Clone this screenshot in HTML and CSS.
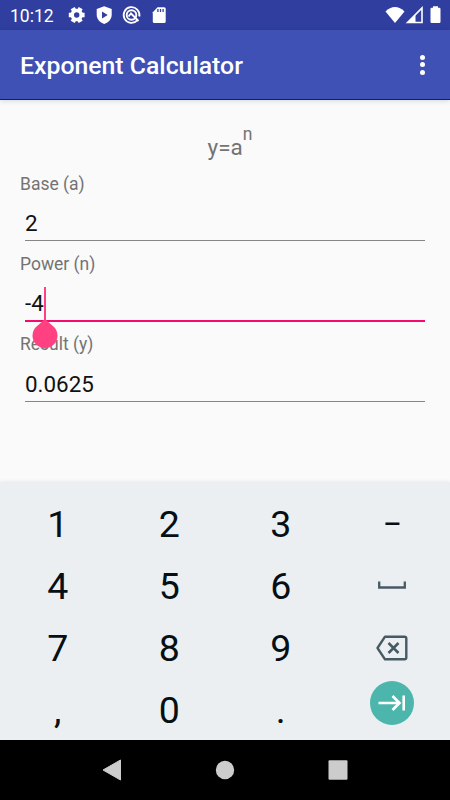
FILE: index.html
```html
<!DOCTYPE html>
<html lang="en">
<head>
  <meta charset="UTF-8">
  <meta name="viewport" content="width=device-width, initial-scale=1.0">
  <title>Exponent Calculator</title>
  <link rel="stylesheet" href="styles.css">
</head>
<body>
  <div class="status-bar">
    <span class="time">10:12</span>
    <svg class="status-icons" width="100" height="30" viewBox="0 0 100 30">
      <!-- settings -->
      <g transform="translate(8.700 15)">
        <circle r="4.500" fill="none" stroke="#fff" stroke-width="3.600"/>
        <path d="M-4 -6.900L-2.800 -4.800M4 -6.900L2.800 -4.800M-4 6.900L-2.800 4.800M4 6.900L2.800 4.800M-7.900 0H-5.500M5.500 0H7.900" stroke="#fff" stroke-width="4.600"/>
      </g>
      <!-- play protect -->
      <path d="M36.200 6.300L43.700 9.100V14.500C43.700 19 40.700 22.500 36.200 24C31.700 22.500 28.700 19 28.700 14.500V9.100Z" fill="#fff"/>
      <path d="M34 11.600V18.400L39.700 15Z" fill="#303f9f"/>
      <!-- data saver -->
      <path d="M69.500 20.200A7.900 7.900 0 1 1 71.300 16.500" fill="none" stroke="#fff" stroke-width="1.800"/>
      <circle cx="63.500" cy="15" r="4.800" fill="none" stroke="#fff" stroke-width="1.900"/>
      <path d="M60.500 16.500L63 13.500L70.500 21" fill="none" stroke="#fff" stroke-width="1.900"/>
      <!-- sd card -->
      <path d="M89.500 7.200H96.200Q97.700 7.200 97.700 8.700V21.500Q97.700 23 96.200 23H86.300Q84.800 23 84.800 21.500V12.200Z" fill="#fff"/>
      <path d="M89.900 9V12M92.500 9V12M95.100 9V12" stroke="#303f9f" stroke-width="1.300"/>
    </svg>
    <svg class="signal-icons" width="58" height="30" viewBox="0 0 58 30">
      <path d="M0.500 11.500C6 5.400 14 5.400 19.500 11.500L10 23Z" fill="#fff"/>
      <path d="M22.500 22.500L37 8V22.500Z" fill="none" stroke="#fff" stroke-width="1.600"/>
      <path d="M22 23L30.500 15V23Z" fill="#fff"/>
      <path d="M48 7.800V6.300H53V7.800H54.300Q55.500 7.800 55.500 9V21.700Q55.500 23 54.300 23H46.700Q45.500 23 45.500 21.700V9Q45.500 7.800 46.700 7.800Z" fill="#fff"/>
    </svg>
  </div>

  <header class="app-bar">
    <h1>Exponent Calculator</h1>
    <div class="menu"><i></i><i></i><i></i></div>
  </header>

  <main class="container">
    <div class="formula">y=a<sup>n</sup></div>

    <div class="field">
      <label for="base">Base (a)</label>
      <input type="text" id="base" value="2">
    </div>
    <div class="field active">
      <label for="power">Power (n)</label>
      <input type="text" id="power" value="-4">
      <span class="cursor"></span>
      <svg class="handle" width="26" height="30" viewBox="0 0 26 30">
        <path d="M13 0L22.200 8.200A12.500 12.500 0 1 1 3.800 8.200Z" fill="#ff4081"/>
      </svg>
    </div>
    <div class="field">
      <label for="result">Result (y)</label>
      <input type="text" id="result" value="0.0625" readonly>
    </div>
  </main>

  <div class="keyboard">
    <div class="key">1</div>
    <div class="key">2</div>
    <div class="key">3</div>
    <div class="key minus">–</div>
    <div class="key">4</div>
    <div class="key">5</div>
    <div class="key">6</div>
    <div class="key">
      <svg width="30" height="10" viewBox="0 0 30 10">
        <path d="M2.200 0.500V6.500H27.800V0.500" fill="none" stroke="#455a64" stroke-width="2.300"/>
      </svg>
    </div>
    <div class="key">7</div>
    <div class="key">8</div>
    <div class="key">9</div>
    <div class="key">
      <svg width="32" height="26" viewBox="0 0 32 26">
        <path d="M9 1.700H28.500Q30.300 1.700 30.300 3.500V22.500Q30.300 24.300 28.500 24.300H9L1.500 13Z" fill="none" stroke="#455a64" stroke-width="2.400" stroke-linejoin="round"/>
        <path d="M12.500 8L22.500 18M22.500 8L12.500 18" stroke="#455a64" stroke-width="2.500"/>
      </svg>
    </div>
    <div class="key">,</div>
    <div class="key">0</div>
    <div class="key">.</div>
    <div class="key next">
      <svg width="44" height="44" viewBox="0 0 44 44">
        <circle cx="22" cy="22" r="22" fill="#4db6ac"/>
        <path d="M8.500 22H30M22.500 15L29.500 22L22.500 29M33.700 14.500V29.500" fill="none" stroke="#fff" stroke-width="2.600"/>
      </svg>
    </div>
  </div>

  <nav class="nav-bar">
    <svg width="20" height="22" viewBox="0 0 20 22"><path d="M1 11L18.500 1V21Z" fill="#ccc" stroke="#ccc" stroke-linejoin="round"/></svg>
    <svg width="20" height="20" viewBox="0 0 20 20"><circle cx="10" cy="10" r="9.200" fill="#ccc"/></svg>
    <svg width="20" height="20" viewBox="0 0 20 20"><rect x="0.500" y="0.300" width="19" height="19.400" rx="1" fill="#ccc"/></svg>
  </nav>
</body>
</html>
```

FILE: styles.css
```css
/* General Styles */
* {
  box-sizing: border-box;
}

body {
  display: flex;
  flex-direction: column;
  height: 800px;
  margin: 0;
  overflow: hidden;
  font-family: Roboto, sans-serif;
  background: #fafafa;
  color: #000;
}

svg {
  display: block;
}

/* Status bar */
.status-bar {
  display: flex;
  height: 30px;
  background: #303f9f;
  color: #fff;
}

.time {
  width: 68px;
  padding-left: 10px;
  font-size: 17.5px;
  line-height: 32px;
}

.signal-icons {
  margin-left: auto;
  margin-right: 7px;
}

/* App bar */
.app-bar {
  display: flex;
  align-items: center;
  justify-content: space-between;
  height: 70px;
  padding: 0 25px 0 20px;
  background: #3f51b5;
  border-bottom: 1px solid #10149a;
  box-shadow: 0 1px 5px rgba(0, 0, 0, 0.15);
  color: #fff;
}

h1 {
  margin: 2px 0 0;
  font-size: 24.8px;
  font-weight: 500;
}

.menu {
  display: flex;
  flex-direction: column;
  gap: 2.5px;
}

.menu i {
  width: 5px;
  height: 5px;
  border-radius: 50%;
  background: #fff;
}

/* Form */
.container {
  flex: 1;
  padding: 20px 20px 0;
}

.formula {
  height: 52.5px;
  padding-left: 10px;
  color: #737373;
  font-size: 22.5px;
  line-height: 54px;
  text-align: center;
}

.formula sup {
  font-size: 17.5px;
  line-height: 0;
  vertical-align: 15px;
}

.field {
  position: relative;
  height: 80.4px;
}

label {
  display: block;
  height: 22px;
  color: #737373;
  font-size: 17.5px;
  line-height: 22px;
}

input {
  display: block;
  width: 400px;
  height: 46.5px;
  margin: 0 5px;
  padding: 11px 0 0;
  border: 0;
  border-bottom: 1px solid #858585;
  background: none;
  color: #111;
  font-family: inherit;
  font-size: 22.4px;
  outline: none;
}

.active input {
  height: 47px;
  border-bottom: 2px solid #f50a70;
}

.cursor {
  position: absolute;
  left: 23.5px;
  top: 34px;
  width: 2px;
  height: 33px;
  background: #ff4081;
}

.handle {
  position: absolute;
  left: 11.5px;
  top: 66px;
  z-index: 1;
}

/* Keyboard */
.keyboard {
  display: grid;
  grid-template-columns: repeat(4, 111.5px);
  grid-auto-rows: 62px;
  height: 258px;
  padding: 11px 2px 0;
  background: #eceff1;
  box-shadow: 0 -1px 3px rgba(0, 0, 0, 0.06);
}

.key {
  display: flex;
  align-items: center;
  justify-content: center;
  color: #050f14;
  font-size: 37.5px;
}

.minus {
  font-size: 28px;
  font-weight: 500;
}

.next {
  padding-bottom: 15px;
}

/* Navigation bar */
.nav-bar {
  display: flex;
  align-items: center;
  justify-content: center;
  gap: 93px;
  height: 60px;
  background: #000;
}
```
